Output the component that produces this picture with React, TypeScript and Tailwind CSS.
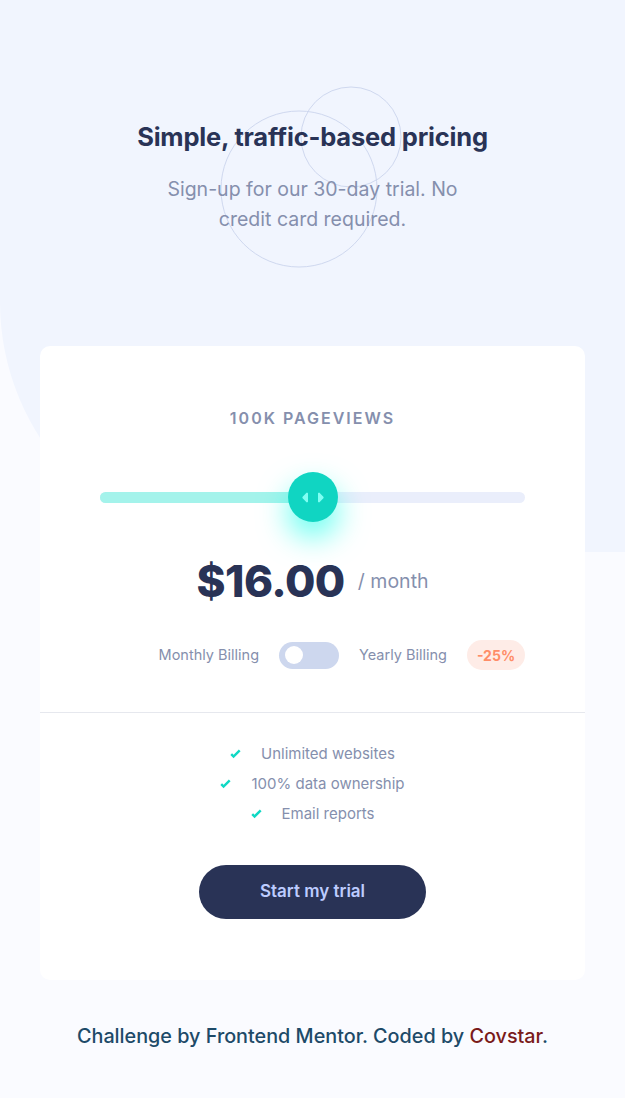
const features = ['Unlimited websites', '100% data ownership', 'Email reports'];

function Check() {
  return (
    <svg width="11" height="10" viewBox="0 0 9 8" className="shrink-0">
      <path fill="none" stroke="#10D8C4" strokeWidth="2" d="M1 4.134l1.907 1.908L7.949 1" />
    </svg>
  );
}

function SliderIcon() {
  return (
    <svg width="22" height="13" viewBox="0 0 22 13">
      <g fill="#80FFF3" fillRule="evenodd">
        <path d="M16 2.558v7.884a1 1 0 001.735.679l3.639-3.943a1 1 0 000-1.356l-3.64-3.943A1 1 0 0016 2.558zM6 2.558v7.884a1 1 0 01-1.735.679L.626 7.178a1 1 0 010-1.356l3.64-3.943A1 1 0 016 2.558z" />
      </g>
    </svg>
  );
}

export default function App() {
  return (
    <div className="relative min-h-screen overflow-hidden bg-[#fafbff] font-['Inter',sans-serif]">
      {/* background shape */}
      <div className="absolute left-0 right-0 top-0 h-[552px] rounded-bl-[250px] bg-[#f1f5fe]" />

      <div className="relative flex flex-col items-center">
        {/* header */}
        <header className="relative mt-[121px] flex flex-col items-center text-center">
          <svg
            className="absolute left-1/2 top-[-35px] ml-[-92px]"
            width="184"
            height="184"
            viewBox="0 0 184 184"
          >
            <circle cx="79" cy="103" r="78" fill="none" stroke="#cfd8ef" strokeWidth="1" />
            <circle cx="131" cy="51" r="50" fill="none" stroke="#cfd8ef" strokeWidth="1" />
          </svg>
          <h1 className="relative text-[25.5px] font-bold leading-[32px] tracking-[-0.2px] text-[#293356]">
            Simple, traffic-based pricing
          </h1>
          <p className="relative mt-[21px] w-[310px] text-[19.5px] leading-[30px] text-[#858fad]">
            Sign-up for our 30-day trial. No credit card required.
          </p>
        </header>

        {/* card */}
        <main className="mt-[112px] w-[545px] rounded-[10px] bg-white">
          <div className="flex flex-col items-center px-[60px] pt-[61px]">
            <p className="text-[16px] font-semibold leading-[22px] tracking-[2px] text-[#858fad]">
              100K PAGEVIEWS
            </p>

            <div className="relative mt-[43px] flex h-[50px] w-full items-center">
              <div className="flex h-[11px] w-full overflow-hidden rounded-full bg-[#eaeefb]">
                <div className="h-full w-[213px] bg-[#a4f3eb]" />
              </div>
              <div className="absolute left-[188px] top-0 flex h-[50px] w-[50px] items-center justify-center rounded-full bg-[#10d5c2] shadow-[0_15px_30px_rgba(0,255,231,0.6)]">
                <SliderIcon />
              </div>
            </div>

            <div className="mt-[31px] flex items-center gap-[13px]">
              <span className="text-[44px] font-extrabold leading-[56px] tracking-[-0.5px] text-[#293356]">
                $16.00
              </span>
              <span className="text-[19.5px] leading-[24px] text-[#858fad]">/ month</span>
            </div>
          </div>

          <div className="mt-[31px] flex items-center justify-end gap-5 pr-[60px] text-[14.5px] text-[#858fad]">
            <span>Monthly Billing</span>
            <div className="flex h-[27px] w-[60px] items-center rounded-full bg-[#cdd7ee] px-[6px]">
              <div className="h-[18px] w-[18px] rounded-full bg-white" />
            </div>
            <span>Yearly Billing</span>
            <span className="flex h-[30px] w-[58px] items-center justify-center rounded-full bg-[#feece7] text-[14px] font-bold text-[#ff8d68]">
              -25%
            </span>
          </div>

          <div className="mt-[42px] h-px w-full bg-[#e6e8ee]" />

          <ul className="mt-[30px] flex flex-col items-center gap-[8px] text-[15px] leading-[22px] text-[#858fad]">
            {features.map((f) => (
              <li key={f} className="flex items-center gap-5">
                <Check />
                <span>{f}</span>
              </li>
            ))}
          </ul>

          <div className="flex justify-center pb-[61px] pt-[40px]">
            <button className="h-[54px] w-[227px] rounded-full bg-[#293356] text-[17px] font-semibold text-[#bdccff]">
              Start my trial
            </button>
          </div>
        </main>

        <footer className="mt-[42px] pb-10 text-[19.8px] font-medium text-[#1d4a68]">
          Challenge by Frontend Mentor. Coded by <span className="text-[#7a1a1a]">Covstar</span>.
        </footer>
      </div>
    </div>
  );
}
